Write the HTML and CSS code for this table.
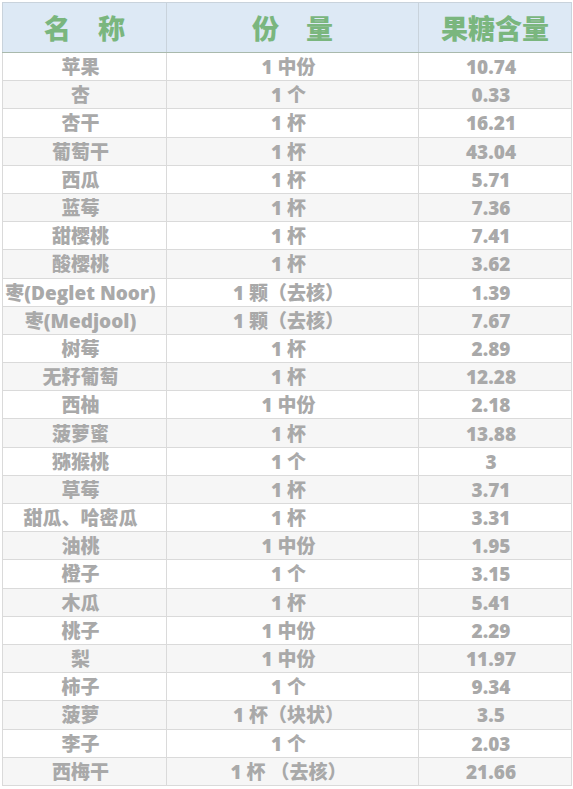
FILE: index.html
```html
<!DOCTYPE html>
<html lang="zh">
<head>
<meta charset="utf-8">
<link rel="stylesheet" href="styles.css">
</head>
<body>
<table class="sugar">
  <colgroup><col class="c1"><col class="c2"><col class="c3"></colgroup>
  <thead>
    <tr><th>名　称</th><th>份　量</th><th>果糖含量</th></tr>
  </thead>
  <tbody>
    <tr><td>苹果</td><td>1 中份</td><td>10.74</td></tr>
    <tr><td>杏</td><td>1 个</td><td>0.33</td></tr>
    <tr><td>杏干</td><td>1 杯</td><td>16.21</td></tr>
    <tr><td>葡萄干</td><td>1 杯</td><td>43.04</td></tr>
    <tr><td>西瓜</td><td>1 杯</td><td>5.71</td></tr>
    <tr><td>蓝莓</td><td>1 杯</td><td>7.36</td></tr>
    <tr><td>甜樱桃</td><td>1 杯</td><td>7.41</td></tr>
    <tr><td>酸樱桃</td><td>1 杯</td><td>3.62</td></tr>
    <tr><td>枣(Deglet Noor)</td><td>1 颗（去核）</td><td>1.39</td></tr>
    <tr><td>枣(Medjool)</td><td>1 颗（去核）</td><td>7.67</td></tr>
    <tr><td>树莓</td><td>1 杯</td><td>2.89</td></tr>
    <tr><td>无籽葡萄</td><td>1 杯</td><td>12.28</td></tr>
    <tr><td>西柚</td><td>1 中份</td><td>2.18</td></tr>
    <tr><td>菠萝蜜</td><td>1 杯</td><td>13.88</td></tr>
    <tr><td>猕猴桃</td><td>1 个</td><td>3</td></tr>
    <tr><td>草莓</td><td>1 杯</td><td>3.71</td></tr>
    <tr><td>甜瓜、哈密瓜</td><td>1 杯</td><td>3.31</td></tr>
    <tr><td>油桃</td><td>1 中份</td><td>1.95</td></tr>
    <tr><td>橙子</td><td>1 个</td><td>3.15</td></tr>
    <tr><td>木瓜</td><td>1 杯</td><td>5.41</td></tr>
    <tr><td>桃子</td><td>1 中份</td><td>2.29</td></tr>
    <tr><td>梨</td><td>1 中份</td><td>11.97</td></tr>
    <tr><td>柿子</td><td>1 个</td><td>9.34</td></tr>
    <tr><td>菠萝</td><td>1 杯（块状）</td><td>3.5</td></tr>
    <tr><td>李子</td><td>1 个</td><td>2.03</td></tr>
    <tr><td>西梅干</td><td>1 杯 （去核）</td><td>21.66</td></tr>
  </tbody>
</table>
</body>
</html>
```
FILE: styles.css
```css
html, body {
  margin: 0;
  padding: 0;
  background: #ffffff;
}
body {
  padding: 2px 0 0 2px;
  font-family: "Open Sans", "Noto Sans CJK SC", sans-serif;
}
.sugar {
  border-collapse: collapse;
  width: 569px;
  table-layout: fixed;
}
.c1 { width: 164px; }
.c2 { width: 252px; }
.c3 { width: 153px; }
.sugar th {
  height: 49px;
  padding: 0;
  background: #dde9f5;
  color: #7ab67e;
  font-family: "Noto Sans CJK SC", sans-serif;
  font-weight: 900;
  font-size: 27px;
  line-height: 1;
  text-align: center;
  border: 1px solid #c9d3dc;
  border-bottom: 1px solid #a9b9ac;
}
.sugar td {
  height: 25.2px;
  padding: 2px 8px 0 0;
  color: #a9a9a9;
  font-weight: 800;
  font-size: 19px;
  line-height: 1;
  text-align: center;
  white-space: nowrap;
  border: 1px solid #dadada;
}
.sugar tbody tr:nth-child(even) td {
  background: #f6f6f6;
}
```
